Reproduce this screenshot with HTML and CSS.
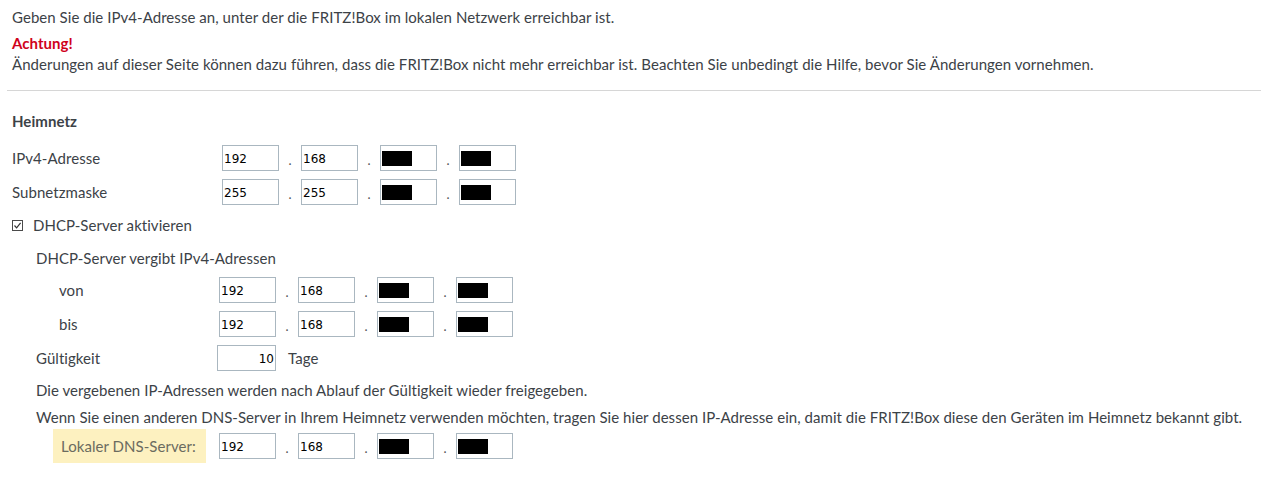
FILE: index.html
```html
<!DOCTYPE html>
<html lang="de">
<head>
<meta charset="utf-8">
<title>Heimnetz</title>
<link rel="stylesheet" href="styles.css">
</head>
<body>
<div class="page">
  <p class="intro">Geben Sie die IPv4-Adresse an, unter der die FRITZ!Box im lokalen Netzwerk erreichbar ist.</p>
  <div class="warn">
    <div class="warn-title">Achtung!</div>
    <p class="warn-text">Änderungen auf dieser Seite können dazu führen, dass die FRITZ!Box nicht mehr erreichbar ist. Beachten Sie unbedingt die Hilfe, bevor Sie Änderungen vornehmen.</p>
  </div>
  <hr class="sep">
  <h2 class="section-title">Heimnetz</h2>

  <div class="row">
    <label class="lbl">IPv4-Adresse</label>
    <div class="ip">
      <input class="oct" value="192"><span class="dot">.</span><input class="oct" value="168"><span class="dot">.</span><input class="oct redacted" value=""><span class="dot">.</span><input class="oct redacted" value="">
    </div>
  </div>
  <div class="row">
    <label class="lbl">Subnetzmaske</label>
    <div class="ip">
      <input class="oct" value="255"><span class="dot">.</span><input class="oct" value="255"><span class="dot">.</span><input class="oct redacted" value=""><span class="dot">.</span><input class="oct redacted" value="">
    </div>
  </div>

  <label class="check">
    <span class="box"><svg width="11" height="11" viewBox="0 0 11 11"><rect x="0.5" y="0.5" width="10" height="10" fill="#fff" stroke="#4a4a4a"/><path d="M2.5 5.5 L4.6 7.8 L8.6 2.8" fill="none" stroke="#333" stroke-width="1.2"/></svg></span>
    <span>DHCP-Server aktivieren</span>
  </label>

  <div class="dhcp">
    <div class="sub-title">DHCP-Server vergibt IPv4-Adressen</div>
    <div class="row row-in first-in">
      <label class="lbl lbl-in">von</label>
      <div class="ip">
        <input class="oct" value="192"><span class="dot">.</span><input class="oct" value="168"><span class="dot">.</span><input class="oct redacted" value=""><span class="dot">.</span><input class="oct redacted" value="">
      </div>
    </div>
    <div class="row row-in">
      <label class="lbl lbl-in">bis</label>
      <div class="ip">
        <input class="oct" value="192"><span class="dot">.</span><input class="oct" value="168"><span class="dot">.</span><input class="oct redacted" value=""><span class="dot">.</span><input class="oct redacted" value="">
      </div>
    </div>
    <div class="row row-in">
      <label class="lbl">Gültigkeit</label>
      <div class="lease">
        <input class="days" value="10"><span class="unit">Tage</span>
      </div>
    </div>
    <p class="note">Die vergebenen IP-Adressen werden nach Ablauf der Gültigkeit wieder freigegeben.</p>
    <p class="note note2">Wenn Sie einen anderen DNS-Server in Ihrem Heimnetz verwenden möchten, tragen Sie hier dessen IP-Adresse ein, damit die FRITZ!Box diese den Geräten im Heimnetz bekannt gibt.</p>
    <div class="row dns-row">
      <label class="dns-lbl">Lokaler DNS-Server:</label>
      <div class="ip">
        <input class="oct" value="192"><span class="dot">.</span><input class="oct" value="168"><span class="dot">.</span><input class="oct redacted" value=""><span class="dot">.</span><input class="oct redacted" value="">
      </div>
    </div>
  </div>
</div>
</body>
</html>
```

FILE: styles.css
```css
html, body {
  margin: 0;
  padding: 0;
  background: #fff;
}
body {
  font-family: Lato, "Liberation Sans", sans-serif;
  font-size: 15px;
  line-height: 20px;
  color: #3c4247;
  letter-spacing: 0.05px;
}
.page {
  padding: 7px 0 0 12px;
}
.intro {
  margin: 0;
}
.warn {
  margin-top: 6px;
}
.warn-title {
  color: #d0021b;
  font-weight: bold;
}
.warn-text {
  margin: 1px 0 0 0;
}
.sep {
  border: 0;
  border-top: 1px solid #d6d6d6;
  margin: 16px 0 0 -5px;
  height: 0;
}
.section-title {
  font-size: 15px;
  font-weight: bold;
  margin: 20px 0 0 0;
  line-height: 20px;
}
.row {
  display: flex;
  align-items: center;
  height: 26px;
  margin-top: 8px;
}
.section-title + .row {
  margin-top: 14px;
}
.lbl {
  width: 210px;
  flex: none;
}
.ip {
  display: flex;
  align-items: center;
}
.oct {
  box-sizing: border-box;
  width: 57px;
  height: 26px;
  border: 1px solid #aab7c0;
  padding: 2px 1px 0 1px;
  font-family: "DejaVu Sans", sans-serif;
  font-size: 12px;
  letter-spacing: 0;
  color: #000;
  background: #fff;
  outline: none;
  margin: 0;
}
.redacted {
  background: #fff linear-gradient(#000, #000) no-repeat 1px 5px / 30px 15px;
}
.dot {
  width: 22px;
  text-align: center;
  font-size: 13px;
  color: #555;
  position: relative;
  top: 2px;
}
.check {
  display: flex;
  align-items: center;
  gap: 10px;
  margin-top: 10px;
  height: 20px;
}
.box {
  display: flex;
  width: 11px;
  height: 11px;
}
.dhcp {
  padding-left: 24px;
}
.sub-title {
  margin-top: 13px;
}
.first-in {
  margin-top: 9px;
}
.row-in .lbl {
  width: 183px;
}
.lbl-in {
  padding-left: 23px;
  box-sizing: border-box;
}
.lease {
  display: flex;
  align-items: center;
}
.days {
  box-sizing: border-box;
  width: 59px;
  height: 26px;
  border: 1px solid #aab7c0;
  padding: 2px 1px 0 1px;
  margin-left: -2px;
  text-align: right;
  font-family: "DejaVu Sans", sans-serif;
  font-size: 12px;
  letter-spacing: 0;
  color: #000;
  outline: none;
}
.unit {
  margin-left: 12px;
}
.note {
  margin: 9px 0 0 0;
}
.note2 {
  margin-top: 7px;
}
.dns-row {
  height: 34px;
  margin-top: 2px;
}
.dns-lbl {
  box-sizing: border-box;
  width: 153px;
  height: 34px;
  margin-left: 17px;
  margin-right: 13px;
  padding-left: 8px;
  display: flex;
  align-items: center;
  background: #fdf1c0;
  color: #6b6b5f;
  flex: none;
}
```
